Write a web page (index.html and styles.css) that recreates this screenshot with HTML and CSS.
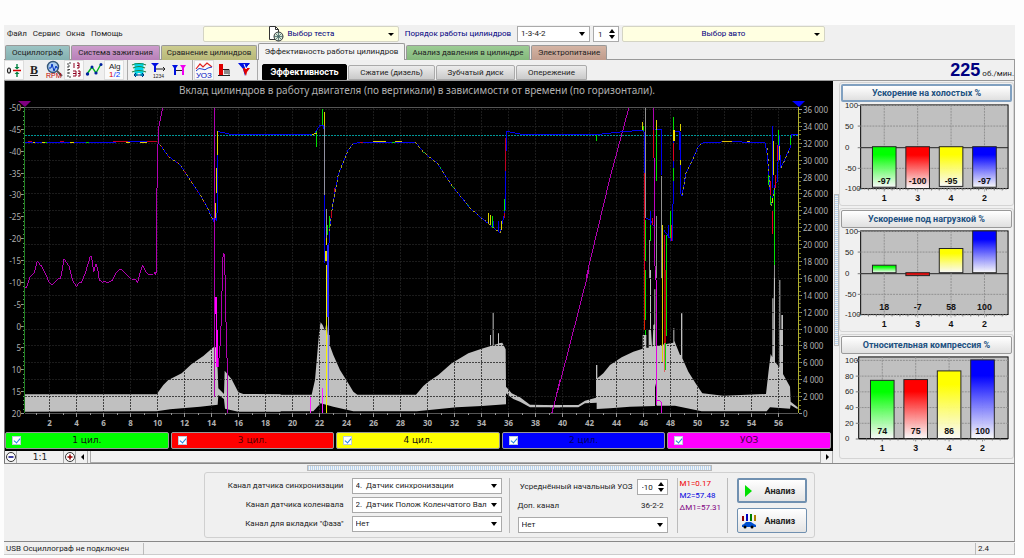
FILE: index.html
```html
<!DOCTYPE html>
<html lang="ru">
<head>
<meta charset="utf-8">
<title>USB Осциллограф</title>
<link rel="stylesheet" href="styles.css">
</head>
<body>
<div class="app">
  <header class="menubar">
    <nav class="menu"><a href="#">Файл</a><a href="#">Сервис</a><a href="#">Окна</a><a href="#">Помощь</a></nav>
    <button class="picker" type="button">
      <svg class="doc-icon" viewBox="0 0 16 16" width="16" height="16"><path d="M1.500 .5h6l3 3v10h-9z" fill="#fff" stroke="#333"/><path d="M7.500 .5v3h3" fill="none" stroke="#333"/><circle cx="10.500" cy="10.500" r="4.500" fill="#d5e5d5" stroke="#333"/><path d="M6 10.500h9M10.500 6v9M7.500 7.500l6 6M13.500 7.500l-6 6" stroke="#466" stroke-width=".8"/></svg>
      <span>Выбор теста</span><i class="caret"></i></button>
    <label class="order-label" for="order">Порядок работы цилиндров</label>
    <span class="select"><select id="order"><option>1-3-4-2</option></select></span>
    <span class="spin"><input type="text" value="1" aria-label="Цилиндр"></span>
    <button class="picker" type="button"><span>Выбор авто</span><i class="caret"></i></button>
  </header>

  <nav class="tabs">
    <button type="button" class="tab teal">Осциллограф</button>
    <button type="button" class="tab violet">Система зажигания</button>
    <button type="button" class="tab olive">Сравнение цилиндров</button>
    <button type="button" class="tab active">Эффективность работы цилиндров</button>
    <button type="button" class="tab green">Анализ давления в цилиндре</button>
    <button type="button" class="tab brown">Электропитание</button>
  </nav>

  <div class="toolbar">
    <div class="tools">
      <button type="button" class="tool on" aria-label="Ноль"><svg viewBox="0 0 20 20"><ellipse cx="5" cy="10.500" rx="1.500" ry="2.500" fill="none" stroke="#222" stroke-width="1.200"/><path d="M9 10.500h8" stroke="#d00000" stroke-width="1.500"/><path d="M13 4v4M13 13v4" stroke="#008040" stroke-width="1.400"/><path d="M10.500 7h5L13 9.500zM10.500 14h5L13 11.500z" fill="#008040"/></svg></button>
      <button type="button" class="tool bold">B</button>
      <button type="button" class="tool" aria-label="Обороты"><svg viewBox="0 0 20 20"><circle cx="9" cy="7" r="5.500" fill="#aaccf0" stroke="#357" stroke-width="1.400"/><path d="M5 8h2l1-4 2 7 2-5 1 2h1" fill="none" stroke="#0030c0"/><path d="M13 11l5 5" stroke="#555" stroke-width="2"/><text x="2" y="18" class="ic" fill="#c00000">RPM</text></svg></button>
      <button type="button" class="tool on" aria-label="Шкала"><svg viewBox="0 0 20 20"><path d="M7 3H4v14h3M4 6h2M4 9.500h2M4 13h2" fill="none" stroke="#444" stroke-dasharray="2 1"/><path d="M10 3v5M13 3h2v5h-2M13 5.500h2M9 11h3v5H9M9 13.500h3M14 11h2v5h-2M14 13.500h2" fill="none" stroke="#900020"/></svg></button>
      <button type="button" class="tool" aria-label="График"><svg viewBox="0 0 20 20"><path d="M3 14L8 7l4 6 5-9" fill="none" stroke="#00b020" stroke-width="1.400"/><g fill="#0020a0"><circle cx="3.500" cy="14" r="1.700"/><circle cx="8" cy="7" r="1.500"/><circle cx="12" cy="13" r="1.600"/><circle cx="17" cy="4.500" r="1.500"/></g></svg></button>
      <button type="button" class="tool on" aria-label="Алгоритм"><svg viewBox="0 0 20 20"><text x="5" y="9" class="ic big" fill="#222">Alg</text><text x="5" y="17" class="ic big" fill="#e00000">1<tspan fill="#0040ff">/2</tspan></text></svg></button>
    </div>
    <div class="tools">
      <button type="button" class="tool" aria-label="Маркеры"><svg viewBox="0 0 20 20"><path d="M5 3h10l-3 4v6h-4V7z" fill="#00d8e8"/><path d="M7 4v12M13 4v12" stroke="#00d8e8" stroke-width="3"/><path d="M3 5q7-3 14 0M4 8q6-3 12 0M3 12q7-3 14 0" fill="none" stroke="#208040" stroke-width="1.200"/><path d="M6 15h8M7 13l-2 2 2 2M13 13l2 2-2 2" fill="none" stroke="#003080"/></svg></button>
      <button type="button" class="tool" aria-label="Отсчёт"><svg viewBox="0 0 20 20"><path d="M2 3h8L7 6v6H5V6z" fill="#0010e0"/><path d="M7 9h9M14 7l2 2-2 2" fill="none" stroke="#222"/><text x="4" y="18" class="ic tiny" fill="#222">1234</text></svg></button>
      <button type="button" class="tool" aria-label="Интервал"><svg viewBox="0 0 20 20"><path d="M3 5h6L7 8v7H5V8z" fill="#0010e0"/><path d="M11 5h6l-2 3v7h-2V8z" fill="#f000f0"/><path d="M7 10.500h6" stroke="#222"/></svg></button>
    </div>
    <div class="tools">
      <button type="button" class="tool on" aria-label="УОЗ"><svg viewBox="0 0 20 20"><path d="M2 9l4-5 3 3 4-4 5 4" fill="none" stroke="#e02020" stroke-width="1.200"/><path d="M2 11q3-4 6-2t6-1l4-1" fill="none" stroke="#2040d0"/><text x="2" y="18" class="ic big" fill="#0010c0">УОЗ</text></svg></button>
      <button type="button" class="tool" aria-label="Столбцы"><svg viewBox="0 0 20 20"><path d="M5 4h4v11H5z" fill="#e00000"/><path d="M4 15.500h12M9 9.500h6v5" fill="none" stroke="#222"/><path d="M11 10v4M13 10v4" stroke="#222"/></svg></button>
      <button type="button" class="tool" aria-label="Фильтр"><svg viewBox="0 0 20 20"><path d="M4 3h12l-4 6-1 7-2-7z" fill="#0010e0"/><path d="M9 8h7l-3 4-1 4-2-4z" fill="#e00000"/><path d="M10 4l2 5 3-4" fill="none" stroke="#fff"/></svg></button>
    </div>
    <nav class="subtabs">
      <button type="button" class="subtab current">Эффективность</button>
      <button type="button" class="subtab">Сжатие (дизель)</button>
      <button type="button" class="subtab">Зубчатый диск</button>
      <button type="button" class="subtab">Опережение</button>
    </nav>
    <p class="rpm"><strong>225</strong> об./мин.</p>
  </div>

  <main class="main">
    <section class="scope">
      <svg class="plot" id="plot" viewBox="5 82 828 350" role="img" aria-label="Вклад цилиндров">
        <text class="title" x="417" y="94">Вклад цилиндров в работу двигателя (по вертикали) в зависимости от времени (по горизонтали).</text>
        <g fill="#c0c0c0">
          <path transform="translate(0 250) scale(.33333)" d="M75 433H470L472 430 490 405 505 390 545 370 575 342 610 318 640 292 648 292 653 360 655 415 672 432 674 362 695 388 715 427 730 432 842 433V485H715L675 476 672 447 655 435 653 464 600 470 510 478 470 484 75 485z"/>
          <path transform="translate(270 270) scale(.33333)" d="M0 374H125L135 330 148 180 152 157 158 165 165 182 170 152 176 220V195H179V225L190 255 210 300 232 335 250 365 262 374H438L460 348 475 335 505 315 545 280 595 250 635 236 660 229V195H663V228L668 226V128H671V225L684 221V190H687V220L697 218 707 238 708 350 725 370 750 382 780 404 870 406V412H780L750 395 730 387 708 370V403L635 408 560 412 440 424H250L190 410 152 400 130 424H0z"/>
          <path transform="translate(550 270) scale(.33333)" d="M0 405H85L105 392 138 383V285H142V325L160 310 180 285 215 262 250 245 278 236V195H289V233H296V180L300 178V0H303V180L306 228 308 230 310 165 313 163V58H316V228L370 218V175H373V212L390 255H393V130H397V265L415 305 440 345 457 370 520 377 648 372 655 310 662 252 667 262V85H670V260L672 0H675V275L688 292V30H691V180H694V135H699V312L720 350 722 395 743 412V418L722 405 720 416 660 412 650 424H455L375 407H320V360L315 340V408L240 410 180 415 140 417V398L105 400 85 412H0z"/>
        </g>
        <g id="grid"></g>
        <path class="level" d="M25 135.500H798"/>
        <g class="trace" transform="translate(0 78) scale(.33333)">
          <path stroke="#0000f0" d="M75 193L230 193 472 191 480 200 505 235 540 260 570 305 600 350 620 385 643 435 652 400V160L675 165 700 171 842 171M640 430L646 400 650 430"/>
          <path stroke="#b0a020" stroke-dasharray="6 9" d="M480 200L505 235 540 260 570 305 600 350 620 385 643 435"/>
          <path stroke="#c00040" stroke-dasharray="5 30" d="M483 204L505 235 540 260 570 305 600 350 620 385"/>
          <path stroke="#e0d000" d="M98 193h8M126 193h12M210 193h12M378 193h12M420 193h22M652 160v70M650 270v75M648 375v45"/>
          <path stroke="#c00020" d="M85 190h12M180 190h12M340 190h45M442 190h30"/>
          <path stroke="#00d000" d="M258 193h8M134 193h6"/>
        </g>
        <g class="trace" transform="translate(270 78) scale(.33333)">
          <path stroke="#0000f0" d="M0 171H130L150 142H162L164 555M174 600L178 460 188 380 205 290 235 215 250 197 270 193H437L460 222 503 257 540 315 600 390 640 425 690 465 705 400 709 160 760 170 870 171M670 450V430M685 460V430"/>
          <path stroke="#a0a030" stroke-dasharray="7 8" d="M178 460L188 380 205 290 235 215 250 197"/>
          <path stroke="#b0a020" stroke-dasharray="6 9" d="M437 193L460 222 503 257 540 315 600 390 640 425 690 465 697 440"/>
          <path stroke="#00a040" stroke-dasharray="8 60" d="M460 222L503 257 540 315 600 390 640 425"/>
          <path stroke="#c00020" d="M270 193h8M707 180v100M705 405v15M184 400v20M194 330v12"/>
          <path stroke="#00e000" d="M157 92V142M139 160V208M178 415V450M174 440V470M704 362V400M668 415V450M365 193h10"/>
          <path stroke="#d8d000" d="M164 102V145M125 170L140 165M309 190h40M375 190h20M656 405v30M662 410v30M694 430v25"/>
          <path stroke="#9090a0" d="M165 145V350M169 393V480"/>
          <path stroke="#e8e000" stroke-width="5" d="M170 480V500M168 520V550M171 560V600"/>
          <path stroke="#2828ff" stroke-width="7" d="M174 500V600"/>
        </g>
        <g class="trace" transform="translate(270 270) scale(.33333)">
          <path stroke="#f0f000" d="M170 0V430"/>
          <path stroke="#2828ff" stroke-width="6" d="M175 0V140"/>
          <path stroke="#8080e8" d="M175 140V378"/>
          <path stroke="#ff20ff" d="M121 382V430M157 353V430"/>
          <path stroke="#b000b0" d="M846 430L870 330"/>
        </g>
        <g class="trace" transform="translate(550 78) scale(.33333)">
          <path stroke="#b000b0" d="M108 600L180 300 237 88M310 88V240M313 240V540L318 600"/>
          <path stroke="#0000f0" d="M0 171H130L200 163 282 156 283 290M287 420L300 425 312 445M316 155H336V290M340 455L368 490 371 160 390 160 391 200 392 345 396 355 408 285 430 240 445 205 460 194 540 191 645 194 652 230 658 310 664 385 675 320 682 310 687 170 692 270 720 210 724 171H743M669 145V330M302 400V440M388 160V215M355 440V480M362 455V490"/>
          <path stroke="#909090" d="M286 88V420M336 295V600M300 485V600M321 415V600M673 560V600"/>
          <path stroke="#a0a030" stroke-dasharray="6 10" d="M396 350L408 285 430 240 445 205 460 194M652 210L658 310 664 385 675 320M694 270L720 210"/>
          <path stroke="#e00020" d="M283 285V600M312 155V240M372 195V250M661 310V350M668 400V467M684 200V250M678 290V330M344 470V600M366 440V490M308 420V440"/>
          <path stroke="#00e000" d="M139 170V188M288 425V550M319 155V308M371 118V155M371 270V308M301 440V488M361 400V480M656 290V320M663 355V380M673 335V560M686 155V200M722 175V200M349 470V600M282 145V160"/>
          <path stroke="#d8d000" d="M278 132V156M320 125V155M391 138V160M393 245V262M338 440V600M667 360V375M690 205V245M671 190V290"/>
          <path stroke="#f0e000" stroke-width="6" d="M373 155V190"/>
          <path stroke="#c000c0" d="M313 240V540"/>
          <path stroke="#e0c000" d="M515 191h30M590 191h10"/>
        </g>
        <g class="trace" transform="translate(550 270) scale(.33333)">
          <path stroke="#b000b0" d="M117 0L40 300 5 430"/>
          <path stroke="#e02000" d="M284 0V180"/><path stroke="#00e000" d="M287 0V150M286 180V195M349 0V100L347 300"/>
          <path stroke="#d8d000" d="M337 0V275"/><path stroke="#b00000" stroke-width="6" d="M344 0V220"/><path stroke="#e06060" d="M345 220V305"/>
          <path stroke="#e000e0" d="M318 0V30M321 30V405M321 392H330L336 400V430"/>
        </g>
        <g class="trace" transform="translate(0 250) scale(.33333)">
          <path stroke="#b000b0" d="M75 112H80L90 80 103 68 112 32 120 45 125 48 135 68 145 92 155 105 165 97 175 86 182 85 192 27 207 48 218 92 230 110 237 98 245 97 255 72 270 22 274 17 281 66 288 42 293 55 298 90 308 97 315 93 322 98 337 92 350 65 362 57 375 68 395 88 407 88 413 98 420 68 428 45 438 65 447 74 460 73 465 67 468 75 470-140 475-360 488-428M645-428V440M655 350L662 265 669 20 671 8 674 20 677 180 682 360V490"/>
          <path stroke="#ff00ff" stroke-width="5" d="M648 140L650 240M652 240V350"/>
        </g>
        <path d="M25 107.500H798M25 413.500H798" stroke="#555"/>
        <path d="M24.500 107V413" stroke="#208020"/><path d="M798.500 107V413" stroke="#b0b030"/>
        <path d="M18 101h13l-6 6z" fill="#800080"/><path d="M792 101h13l-6 6z" fill="#0000ff"/>
        <g id="axes"></g>
      </svg>
      <div class="channels">
        <label class="chan c1"><input type="checkbox" checked><span>1 цил.</span></label>
        <label class="chan c3"><input type="checkbox" checked><span>3 цил.</span></label>
        <label class="chan c4"><input type="checkbox" checked><span>4 цил.</span></label>
        <label class="chan c2"><input type="checkbox" checked><span>2 цил.</span></label>
        <label class="chan uoz"><input type="checkbox" checked><span>УОЗ</span></label>
      </div>
      <div class="scrollrow">
        <button type="button" aria-label="Уменьшить"><svg viewBox="0 0 12 12"><circle cx="6" cy="6" r="4.500" fill="#fff" stroke="#333"/><path d="M3.500 6h5" stroke="#000080" stroke-width="1.500"/></svg></button>
        <span class="ratio">1:1</span>
        <button type="button" aria-label="Увеличить"><svg viewBox="0 0 12 12"><circle cx="6" cy="6" r="4.500" fill="#fff" stroke="#333"/><path d="M3.500 6h5M6 3.500v5" stroke="#900000" stroke-width="1.500"/></svg></button>
        <button type="button" aria-label="Влево"><svg viewBox="0 0 12 12"><path d="M8 3v6L5 6z"/></svg></button>
        <span class="track"></span>
        <button type="button" aria-label="Вправо"><svg viewBox="0 0 12 12"><path d="M5 3v6l3-3z"/></svg></button>
      </div>
    </section>
    <div class="vsplit"><div class="grip"></div></div>
    <aside class="side">
      <section class="card"><button type="button" class="cap focus">Ускорение на холостых %</button><svg class="bars" id="idle" viewBox="840 102 174 104"></svg></section>
      <section class="card"><button type="button" class="cap">Ускорение под нагрузкой %</button><svg class="bars" id="load" viewBox="840 102 174 104"></svg></section>
      <section class="card"><button type="button" class="cap">Относительная компрессия %</button><svg class="bars" id="comp" viewBox="840 102 174 104"></svg></section>
    </aside>
  </main>

  <section class="bottom">
    <div class="hgrip"></div>
    <div class="panel">
      <div class="fields">
        <label for="sync">Канал датчика синхронизации</label><span class="select"><select id="sync"><option>4.&nbsp; Датчик синхронизации</option></select></span>
        <label for="crank">Канал датчика коленвала</label><span class="select"><select id="crank"><option>2.&nbsp; Датчик Полож Коленчатого Вал</option></select></span>
        <label for="phase">Канал для вкладки "Фаза"</label><span class="select"><select id="phase"><option>Нет</option></select></span>
      </div>
      <div class="extra">
        <div class="line right"><label for="uoz">Усреднённый начальный УОЗ</label><span class="spin"><input id="uoz" type="text" value="-10"></span></div>
        <div class="line between"><label for="add">Доп. канал</label><span>36-2-2</span></div>
        <span class="select"><select id="add"><option>Нет</option></select></span>
      </div>
      <div class="marks"><span class="m1">M1=0.17</span><span class="m2">M2=57.48</span><span class="dm">ΔM1=57.31</span></div>
      <div class="actions">
        <button type="button" class="run focused"><svg viewBox="0 0 16 16"><path d="M4 2v12l7-6z" fill="#00e000"/></svg><span>Анализ</span></button>
        <button type="button" class="run"><svg viewBox="0 0 16 16"><path d="M1 3h2v5H1z" fill="#900000"/><path d="M5 1h2v7H5z" fill="#0000c0"/><path d="M9 1h2v7H9z" fill="#008000"/><path d="M13 2h2v6h-2z" fill="#b08000"/><path d="M1 12l2-1 2-2h5l3 2 2 1v2H1z" fill="#0050d0"/><circle cx="4" cy="14" r="1.500"/><circle cx="11" cy="14" r="1.500"/></svg><span>Анализ</span></button>
      </div>
    </div>
  </section>
  <footer class="status"><span>USB Осциллограф не подключен</span><span></span><span>2.4</span></footer>
</div>
<script src="charts.js"></script>
</body>
</html>
```
FILE: charts.js
```js
const NS = "http://www.w3.org/2000/svg";
function add(parent, tag, attrs, text) {
  const el = document.createElementNS(NS, tag);
  for (const k in attrs) el.setAttribute(k, attrs[k]);
  if (text !== undefined) el.textContent = text;
  parent.appendChild(el);
  return el;
}
const grid = document.getElementById("grid");
const axes = document.getElementById("axes");
const timeX = t => Math.round(22 + 13.5 * t) + 0.5;
const rpmY = r => Math.round(413 - r * 304 / 36000) + 0.5;
for (let t = 2; t <= 56; t += 2) {
  add(grid, "path", { d: `M${timeX(t)} 108V413` });
  add(axes, "path", { d: `M${timeX(t)} 413V417`, class: "tick" });
  add(axes, "text", { x: timeX(t), y: 426, class: "time" }, t);
}
for (let t = 1; t < 57; t += 1) add(axes, "path", { d: `M${timeX(t)} 413V415`, class: "tick" });
for (let r = 0; r <= 36000; r += 2000) {
  if (r) add(grid, "path", { d: `M25 ${rpmY(r)}H798` });
  add(axes, "path", { d: `M799 ${rpmY(r)}h3`, class: "tick" });
  const label = r ? r / 1000 + " 000" : "0";
  add(axes, "text", { x: 803, y: rpmY(r) + 3, class: "rpmtext" }, label);
}
for (let r = 500; r < 36000; r += 500) add(axes, "path", { d: `M799 ${rpmY(r)}h2`, class: "tick gold" });
for (let v = -50; v <= 20; v += 5) {
  const y = Math.round(107 + (v + 50) * 306 / 70) + 0.5;
  add(axes, "path", { d: `M21 ${y}h3`, class: "tick" });
  add(axes, "text", { x: 21, y: y + 3, class: "angle" }, v);
}
for (let v = -49; v < 20; v += 1) {
  const y = Math.round(107 + (v + 50) * 306 / 70) + 0.5;
  add(axes, "path", { d: `M23 ${y}h1`, class: "tick lime" });
}

const colors = ["#00ff00", "#ff0000", "#ffff00", "#0000ff"];
const ids = ["1", "3", "4", "2"];
function bars(id, values, o) {
  const svg = document.getElementById(id);
  const defs = add(svg, "defs", {});
  const y = v => o.top + (o.max - v) * (o.bottom - o.top) / (o.max - o.min);
  add(svg, "rect", { x: o.left, y: 105, width: 1010 - o.left, height: o.bottom - 105, class: "frame" });
  for (const v of o.labels) {
    add(svg, "path", { d: `M${o.left} ${Math.round(y(v)) + 0.5}H1010`, class: v === 0 ? "zero" : "guide" });
    add(svg, "path", { d: `M${o.left - 3} ${Math.round(y(v)) + 0.5}h3`, class: "mark" });
    add(svg, "text", { x: 844, y: y(v) + 3, class: "scale" }, v);
  }
  values.forEach((v, i) => {
    const cx = o.first + i * o.step;
    const g = add(defs, "linearGradient", { id: id + i, x1: 0, y1: 0, x2: 0, y2: 1 });
    add(g, "stop", { offset: 0.2, "stop-color": colors[i] });
    add(g, "stop", { offset: 1, "stop-color": v === -7 ? "#b02020" : "#ffffff", "stop-opacity": 0.9 });
    add(svg, "path", { d: `M${cx} 105V${o.bottom + 3}`, class: "guide" });
    const a = y(Math.max(v, 0)), b = y(Math.min(v, 0));
    add(svg, "rect", { x: cx - 12, y: a, width: 24, height: b - a, fill: `url(#${id + i})`, stroke: "#222" });
    add(svg, "text", { x: cx, y: o.bottom - 5, class: "value" }, v);
    add(svg, "text", { x: cx, y: o.bottom + 13, class: "value" }, ids[i]);
  });
  for (let x = o.left + 8; x < 1008; x += 8) add(svg, "path", { d: `M${x} ${o.bottom}v2`, class: "mark" });
}
const both = { top: 105, bottom: 190, min: -100, max: 100, left: 860, first: 884, step: 34, labels: [100, 50, 0, -50, -100] };
bars("idle", [-97, -100, -95, -97], both);
bars("load", [18, -7, 58, 100], both);
bars("comp", [74, 75, 86, 100], { top: 108, bottom: 188, min: 0, max: 100, left: 858, first: 882, step: 34, labels: [100, 80, 60, 40, 20, 0] });
```
FILE: styles.css
```css
* { box-sizing: border-box; }
body { margin: 0; background: #fdfdfd; font: 8px/12px Roboto, "Liberation Sans", sans-serif; color: #222; }
button, input, select { font: inherit; color: inherit; margin: 0; padding: 0; border: 0; background: none; }
a { color: inherit; text-decoration: none; }
.app { margin: 25px 9px 0 4px; background: #f0f0f0; }

.menubar { display: grid; grid-template-columns: 196px 196px 112px 73px 26px 203px; column-gap: 3px; align-items: center; height: 18px; }
.menu { display: flex; gap: 6px; padding-left: 3px; }
.picker { position: relative; display: flex; align-items: center; justify-content: center; gap: 4px; height: 16px; background: #ffffe1; border: 1px solid #d4d4c4; border-radius: 2px; color: #000080; }
.caret { position: absolute; right: 4px; top: 6px; border: 3px solid transparent; border-top-color: #000; border-bottom: 0; }
.order-label { color: #000080; text-align: center; white-space: nowrap; }
.select, .spin { position: relative; display: block; min-width: 0; height: 16px; background: #fff; border: 1px solid #aaa; }
.select select { display: block; appearance: none; width: 100%; height: 14px; padding: 0 12px 0 3px; color: #222; overflow: hidden; }
.select::after { content: ""; position: absolute; right: 4px; top: 5px; border: 3px solid transparent; border-top: 4px solid #000; border-bottom: 0; }
.spin input { display: block; width: 100%; height: 14px; padding: 0 10px 0 4px; }
.spin::before, .spin::after { content: ""; position: absolute; right: 3px; border: 3px solid transparent; }
.spin::before { top: 2px; border-bottom: 4px solid #000; border-top: 0; }
.spin::after { bottom: 2px; border-top: 4px solid #000; border-bottom: 0; }

.tabs { display: grid; grid-template-columns: 65px 89px 96px 147px 124px 76px; column-gap: 1px; padding-left: 1px; height: 16px; align-items: end; }
.tab { height: 15px; border: 1px solid #999; border-bottom: 0; border-radius: 2px 2px 0 0; white-space: nowrap; }
.teal { background: linear-gradient(#9cc4c4, #84b0b0); }
.violet { background: linear-gradient(#cc9ccc, #b880b8); }
.olive { background: linear-gradient(#cccc90, #b8b878); }
.green { background: linear-gradient(#9ccc94, #84b87c); }
.brown { background: linear-gradient(#d4b4a4, #c09c8c); }
.active { height: 17px; background: #f4f4f4; }

.toolbar { display: flex; align-items: stretch; height: 22px; border: 1px solid #999; border-left: 0; }
.tools { display: flex; padding-right: 3px; border-right: 1px solid #aaa; }
.tools + .tools { padding-left: 1px; }
.tool { width: 20px; height: 20px; }
.tool svg { display: block; width: 20px; height: 20px; }
.on { background: #fafafa; border: 1px solid #ddd; }
.on svg { margin: -1px; }
.bold { font: bold 12px/14px "Liberation Serif", serif; text-decoration: underline; }
.ic { font: 7px "Liberation Sans", sans-serif; }
.big { font-size: 8px; }
.tiny { font-size: 5px; }
.subtabs { display: grid; grid-template-columns: 85px 87px 79px 71px; column-gap: 1px; align-items: end; margin-left: 4px; }
.subtab { height: 15px; background: linear-gradient(#ececec, #cacaca); border: 1px solid #aaa; border-radius: 2px 2px 0 0; }
.current { height: 16px; background: #000; border-color: #000; color: #fff; font-weight: bold; font-size: 9px; }
.rpm { margin: 0 0 0 auto; line-height: 20px; white-space: nowrap; }
.rpm strong { font: bold 18px/20px "Liberation Sans", sans-serif; color: #000080; }

.main { display: grid; grid-template-columns: minmax(0, 1fr) 6px 175px; border-right: 1px solid #999; border-bottom: 1px solid #888; }
.scope { padding-top: 1px; border-left: 1px solid #777; background: #000; }
.plot { display: block; width: 100%; height: auto; }
.plot text { font: 9px "Noto Sans", sans-serif; fill: #b0b0b0; }
.plot .title { font-size: 10px; text-anchor: middle; }
.plot .time { text-anchor: middle; font-weight: bold; font-size: 8px; }
.plot .rpmtext { font-size: 8px; }
.plot .angle { text-anchor: end; font-size: 8px; }
#grid path { stroke: #222; stroke-opacity: .8; stroke-dasharray: 2 1; shape-rendering: crispEdges; }
.level { stroke: #009898; stroke-dasharray: 2 1; shape-rendering: crispEdges; }
.trace path { fill: none; stroke-width: 3; shape-rendering: crispEdges; }
.trace path[stroke-width="5"] { stroke-width: 5; }
.trace path[stroke-width="6"] { stroke-width: 6; }
.trace path[stroke-width="7"] { stroke-width: 7; }
.tick { stroke: #999; }
.gold { stroke: #808020; }
.lime { stroke: #60a060; }
.channels { display: grid; grid-template-columns: repeat(5, 1fr); gap: 2px; padding: 0 2px 2px 0; }
.chan { display: grid; grid-template-columns: 20px 1fr; align-items: center; height: 17px; border: 1px solid #999; border-radius: 2px; font: 9px/15px "DejaVu Sans", sans-serif; text-align: center; color: #111; }
.chan span { padding-right: 20px; }
.chan input { appearance: none; width: 9px; height: 9px; margin-left: 6px; background: #fff; border: 1px solid #bcd; }
.chan input:checked::before { content: ""; display: block; width: 3px; height: 5px; margin-left: 2px; border: solid #2080e0; border-width: 0 1px 1px 0; transform: rotate(40deg); }
.c1 { background: #00ff00; }
.c3 { background: #ff0000; color: #500; }
.c4 { background: #ffff00; }
.c2 { background: #0000ff; color: #000060; }
.uoz { background: #ff00ff; color: #400040; }
.scrollrow { display: flex; align-items: stretch; height: 12px; background: #f0f0f0; }
.scrollrow button { width: 12px; border-right: 1px solid #aaa; }
.scrollrow svg { display: block; width: 12px; height: 12px; }
.ratio { width: 47px; border-right: 1px solid #aaa; text-align: center; font: 9px/13px "DejaVu Sans", sans-serif; }
.track { flex: 1; margin-left: 2px; border: 1px solid #aaa; border-width: 0 1px 1px; background: #f2f2f2; }
.vsplit { display: flex; flex-direction: column; justify-content: center; padding-left: 1px; }
.grip { height: 152px; margin-bottom: 4px; border: 1px solid #bbb; background: repeating-linear-gradient(#b8d4ee 0 1px, #f4f4f4 1px 2px); }
.side { display: grid; gap: 2px; padding: 1px 0; align-content: start; }
.card { padding: 1px; border: 1px solid #d4d4d4; border-radius: 3px; }
.cap { display: block; width: 100%; height: 18px; border: 1px solid #999; border-radius: 2px; background: linear-gradient(#fff, #e0e0e0); font-weight: bold; font-size: 9px; color: #205080; }
.focus { border: 2px solid #80a0c0; }
.bars { display: block; width: 100%; height: auto; overflow: visible; }
.bars text { font: 8px "Liberation Sans", sans-serif; fill: #222; }
.bars .value { font-weight: bold; font-size: 9px; text-anchor: middle; fill: #111; }
.frame { fill: #c0c0c0; stroke: #000; }
.guide { stroke: #909090; stroke-dasharray: 2 1; }
.zero { stroke: #222; }
.mark { stroke: #777; }

.bottom { display: flex; flex-direction: column; align-items: center; padding: 1px 0 3px; border-right: 1px solid #999; border-bottom: 1px solid #888; }
.hgrip { width: 405px; height: 6px; border: 1px solid #bbb; background: repeating-linear-gradient(90deg, #b8d4ee 0 1px, #f4f4f4 1px 2px); }
.panel { display: grid; grid-template-columns: 302px 168px 51px 84px; height: 66px; border: 1px solid #d0d0d0; border-radius: 3px; margin-top: 1px; padding: 5px 2px; }
.fields { display: grid; grid-template-columns: 137px 150px; column-gap: 8px; row-gap: 3px; align-content: start; align-items: center; text-align: right; }
.extra { display: flex; flex-direction: column; gap: 3px; padding: 1px 9px 0 8px; border-left: 1px solid #bbb; }
.line { display: flex; align-items: center; gap: 4px; height: 16px; white-space: nowrap; }
.right { justify-content: flex-end; }
.right .spin { width: 31px; }
.between { justify-content: space-between; padding-right: 4px; }
.marks { display: flex; flex-direction: column; padding-left: 2px; border: 1px solid #bbb; border-width: 0 1px; }
.m1 { color: #f00000; }
.m2 { color: #0000e0; }
.dm { color: #800080; }
.actions { display: flex; flex-direction: column; gap: 5px; padding: 0 5px 0 9px; }
.run { display: flex; align-items: center; gap: 8px; height: 25px; padding-left: 3px; border: 1px solid #7090b0; border-radius: 2px; background: linear-gradient(#fff, #e4e4e4); font-weight: bold; font-size: 9px; }
.run svg { width: 16px; height: 16px; }
.focused { border-width: 2px; padding-left: 2px; }
.status { display: grid; grid-template-columns: 140px 1fr 39px; margin-top: 1px; height: 12px; border-bottom: 1px solid #ccc; white-space: nowrap; }
.status span { padding-left: 2px; border-right: 1px solid #bbb; }
```
